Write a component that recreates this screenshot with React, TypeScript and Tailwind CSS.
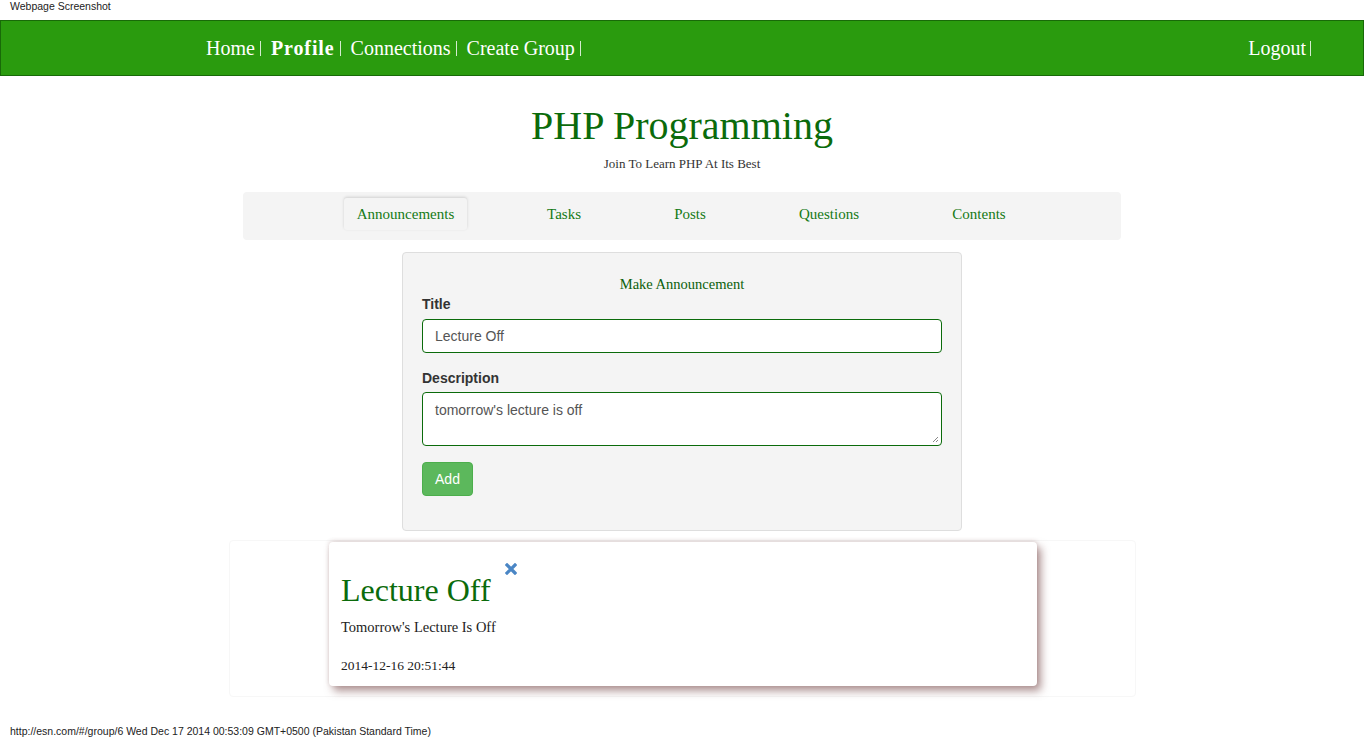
import React from "react";

const serif = { fontFamily: '"Liberation Serif", "DejaVu Serif", serif' };

export default function App() {
  const navLinks = [
    { t: "Home", b: false },
    { t: "Profile", b: true },
    { t: "Connections", b: false },
    { t: "Create Group", b: false },
  ];
  const tabs = ["Announcements", "Tasks", "Posts", "Questions", "Contents"];
  return (
    <div className="w-[1364px] h-[737px] bg-white relative overflow-hidden" style={{ fontFamily: '"Liberation Sans", Arial, sans-serif' }}>
      <div className="h-[20px] pl-[10px] pt-[1px] text-[10.5px] leading-[10px] text-[#222]">Webpage Screenshot</div>
      <nav className="h-[56px] bg-[#2a9b0e] border border-[#186a08] flex items-center justify-between pl-[205px] pr-[52px] text-white text-[20px]" style={serif}>
        <div className="flex items-center">
          {navLinks.map((l) => (
            <div key={l.t} className="flex items-center">
              <span className={l.b ? "font-bold tracking-[0.9px]" : ""}>{l.t}</span>
              <span className="inline-block w-px h-[15px] bg-white/80 ml-[5px] mr-[10px]" />
            </div>
          ))}
        </div>
        <div className="flex items-center">
          <span>Logout</span>
          <span className="inline-block w-px h-[15px] bg-white/80 ml-[4px]" />
        </div>
      </nav>

      <div className="flex flex-col items-center" style={serif}>
        <h1 className="mt-[26px] text-[40px] leading-[48px] text-[#0b6b0b]">PHP Programming</h1>
        <p className="mt-[7px] text-[13px] leading-[14px] text-[#333]">Join To Learn PHP At Its Best</p>

        <div className="mt-[21px] w-[878px] h-[48px] bg-[#f4f4f4] rounded-[4px] flex items-start pt-[6px] pl-[101px] text-[15px] text-[#157a15]">
          <div className="w-[123px] h-[32px] flex items-center justify-center rounded-[3px] bg-[#f4f4f4] shadow-[0_-1px_3px_rgba(0,0,0,0.15)]">
            {tabs[0]}
          </div>
          <div className="w-[194px] h-[32px] flex items-center justify-center">{tabs[1]}</div>
          <div className="w-[58px] h-[32px] flex items-center justify-center">{tabs[2]}</div>
          <div className="w-[220px] h-[32px] flex items-center justify-center">{tabs[3]}</div>
          <div className="w-[80px] h-[32px] flex items-center justify-center">{tabs[4]}</div>
        </div>

        <div className="mt-[12px] w-[560px] h-[279px] bg-[#f4f4f4] border border-[#dedede] rounded-[4px] px-[19px] pt-[22px]">
          <div className="text-center text-[14.5px] leading-[18px] text-[#0b5f0b]">Make Announcement</div>
          <div style={{ fontFamily: '"Liberation Sans", Arial, sans-serif' }}>
            <label className="block mt-[1px] text-[14px] leading-[20px] font-bold text-[#333]">Title</label>
            <div className="mt-[5px] h-[34px] bg-white border border-[#0b6b0b] rounded-[4px] px-[12px] flex items-center text-[14px] text-[#555]">Lecture Off</div>
            <label className="block mt-[15px] text-[14px] leading-[20px] font-bold text-[#333]">Description</label>
            <div className="relative mt-[4px] h-[54px] bg-white border border-[#0b6b0b] rounded-[4px] px-[12px] pt-[7px] text-[14px] leading-[20px] text-[#555]">
              tomorrow's lecture is off
              <svg className="absolute right-[2px] bottom-[2px]" width="7" height="7" viewBox="0 0 7 7">
                <path d="M6 1 L1 6 M6 4 L4 6" stroke="#888" strokeWidth="1" />
              </svg>
            </div>
            <button className="mt-[16px] w-[51px] h-[34px] bg-[#5cb85c] border border-[#4cae4c] rounded-[4px] text-white text-[14px]">Add</button>
          </div>
        </div>

        <div className="mt-[9px] w-[907px] h-[157px] border border-[#f7f7f7] rounded-[4px] flex justify-center pt-[1px]">
          <div className="ml-[2px] w-[708px] h-[144px] bg-white rounded-[4px] shadow-[4px_5px_8px_rgba(110,60,60,0.55),0_-1px_4px_rgba(110,60,60,0.2)] px-[12px] relative">
            <div className="flex items-start">
              <div className="mt-[29px] text-[32px] leading-[38px] text-[#0b6b0b]">Lecture Off</div>
              <svg className="ml-[14px] mt-[21px]" width="12" height="12" viewBox="0 0 12 12">
                <path d="M2 2 L10 10 M10 2 L2 10" stroke="#4a86c5" strokeWidth="3.2" strokeLinecap="square" />
              </svg>
            </div>
            <div className="mt-[9px] text-[14.5px] leading-[18px] text-[#222]">Tomorrow's Lecture Is Off</div>
            <div className="mt-[22px] text-[13.5px] leading-[16px] text-[#222]">2014-12-16 20:51:44</div>
          </div>
        </div>
      </div>

      <div className="absolute left-[10px] top-[726px] text-[10.5px] leading-[10px] text-[#222]">http://esn.com/#/group/6 Wed Dec 17 2014 00:53:09 GMT+0500 (Pakistan Standard Time)</div>
    </div>
  );
}
